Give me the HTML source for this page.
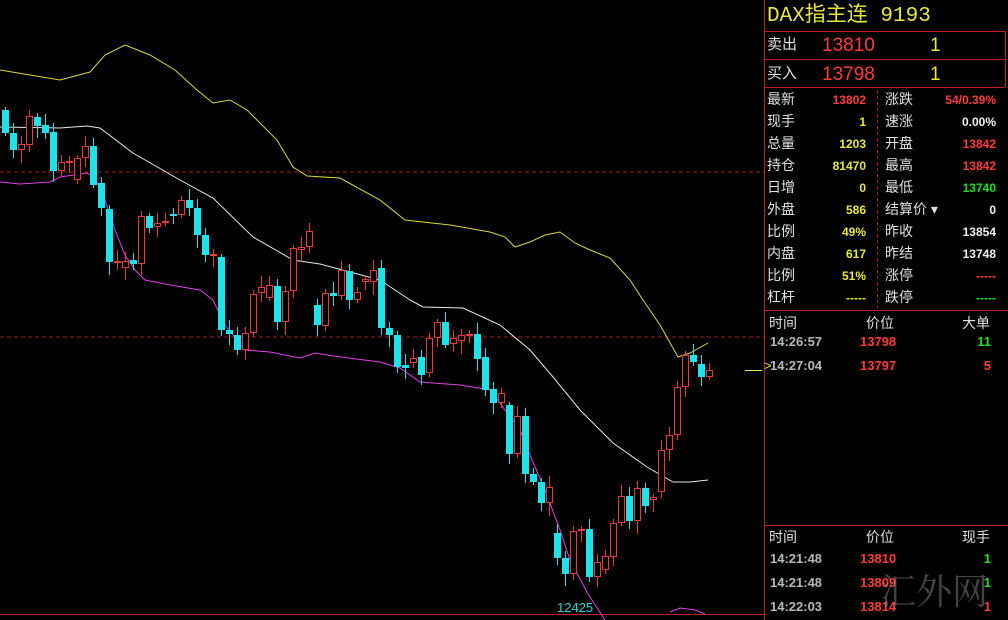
<!DOCTYPE html>
<html><head><meta charset="utf-8"><style>
body{margin:0;background:#000;width:1008px;height:620px;overflow:hidden;position:relative;font-family:"Liberation Sans","Noto Sans CJK SC",sans-serif}
.t{position:absolute;white-space:nowrap;font-size:13px;line-height:16px}
.cn{color:#e0e0e0;font-size:14px}
.r{color:#ff3b3b;font-weight:bold}.y{color:#e8e83a;font-weight:bold}.w{color:#f0f0f0;font-weight:bold}.g{color:#1fe01f;font-weight:bold}.gr{color:#b8b8b8;font-weight:bold}
.ra{text-align:right}
</style></head><body>
<svg id="c" width="1008" height="620" style="position:absolute;left:0;top:0">
<line x1="0" y1="172" x2="764" y2="172" stroke="#a02020" stroke-dasharray="4,3"/>
<line x1="0" y1="337" x2="764" y2="337" stroke="#a02020" stroke-dasharray="4,3"/>
<line x1="0" y1="614.5" x2="764" y2="614.5" stroke="#c02020"/>
<line x1="745" y1="370.5" x2="762" y2="370.5" stroke="#e8e83a"/>
<polyline fill="none" stroke="#d8d83a" stroke-width="1" points="0,70 30,75 60,80 90,72 105,55 125,45 150,55 175,70 197,90 213,103 230,100 247,110 277,140 293,167 307,176 340,178 380,200 405,220 450,225 490,232 505,237 515,247 530,242 545,235 560,232 575,243 590,250 610,258 630,280 643,300 660,325 678,357 690,353 708,343"/>
<polyline fill="none" stroke="#e8e8e8" points="0,127 60,128 87,126 100,128 133,153 180,180 213,198 253,237 293,260 320,264 380,280 410,300 423,307 463,308 500,325 530,350 553,377 580,410 613,443 647,467 673,482 690,482 708,480"/>
<polyline fill="none" stroke="#e040e0" points="0,182 20,184 50,182 60,177 87,173 95,178 105,200 115,230 125,255 135,270 145,280 170,285 200,290 213,300 225,325 245,350 270,352 300,358 315,353 333,356 380,362 400,368 420,382 460,385 490,390 505,410 520,430 530,455 545,490 560,530 570,560 588,594 605,620"/>
<polyline fill="none" stroke="#e040e0" points="670,612 680,608 695,610 705,614"/>
<g id="k"></g>
<text x="557" y="612" fill="#20d8d8" font-family="Liberation Sans" font-size="13">12425</text>
<!-- panel lines -->
<g stroke="#c02020" fill="none">
<line x1="764.5" y1="0" x2="764.5" y2="620"/>
<line x1="764" y1="31.5" x2="1005" y2="31.5"/>
<line x1="764" y1="59.5" x2="1005" y2="59.5"/>
<line x1="764" y1="87.5" x2="1005" y2="87.5"/>
<line x1="1005.5" y1="31" x2="1005.5" y2="87"/>
<line x1="764" y1="310.5" x2="1008" y2="310.5"/>
<line x1="764" y1="525.5" x2="1008" y2="525.5"/>
<line x1="877.5" y1="90" x2="877.5" y2="308" stroke-dasharray="3,3"/>
</g>
</svg>
<div class="t" style="left:767px;top:5px;font-size:21px;line-height:24px;color:#e8e83a;font-family:'Liberation Mono','Noto Sans CJK SC',monospace">DAX指主连 9193</div>
<div class="t cn" style="left:767px;top:37px;font-size:15px">卖出</div><div class="t" style="left:822px;top:35px;font-size:19px;line-height:22px;color:#ff3b3b">13810</div><div class="t" style="left:930px;top:35px;font-size:19px;line-height:22px;color:#e8e83a">1</div>
<div class="t cn" style="left:767px;top:66px;font-size:15px">买入</div><div class="t" style="left:822px;top:64px;font-size:19px;line-height:22px;color:#ff3b3b">13798</div><div class="t" style="left:930px;top:64px;font-size:19px;line-height:22px;color:#e8e83a">1</div>
<div id="rows"></div>
<div class="t cn" style="left:769px;top:315px">时间</div><div class="t cn" style="left:866px;top:315px">价位</div><div class="t cn" style="left:962px;top:315px">大单</div>
<div class="t gr" style="left:770px;top:334px">14:26:57</div><div class="t r" style="left:860px;top:334px">13798</div><div class="t g ra" style="left:950px;width:41px;top:334px">11</div>
<div class="t gr" style="left:770px;top:358px">14:27:04</div><div class="t r" style="left:860px;top:358px">13797</div><div class="t r ra" style="left:950px;width:41px;top:358px">5</div>
<div class="t" style="left:764px;top:358px;color:#e8e83a">&gt;</div>
<div class="t cn" style="left:769px;top:529px">时间</div><div class="t cn" style="left:866px;top:529px">价位</div><div class="t cn" style="left:962px;top:529px">现手</div>
<div class="t gr" style="left:770px;top:551px">14:21:48</div><div class="t r" style="left:860px;top:551px">13810</div><div class="t g ra" style="left:950px;width:41px;top:551px">1</div>
<div class="t gr" style="left:770px;top:575px">14:21:48</div><div class="t r" style="left:860px;top:575px">13809</div><div class="t g ra" style="left:950px;width:41px;top:575px">1</div>
<div class="t gr" style="left:770px;top:599px">14:22:03</div><div class="t r" style="left:860px;top:599px">13814</div><div class="t r ra" style="left:950px;width:41px;top:599px">1</div>
<div class="t" style="left:880px;top:570px;font-size:36px;line-height:40px;color:rgba(150,150,150,0.45);font-family:'Noto Serif CJK SC',serif">汇外网</div>
<script>
var R=[["最新","13802","r","涨跌","54/0.39%","r"],["现手","1","y","速涨","0.00%","w"],["总量","1203","y","开盘","13842","r"],["持仓","81470","y","最高","13842","r"],["日增","0","y","最低","13740","g"],["外盘","586","y","结算价 ▾","0","w"],["比例","49%","y","昨收","13854","w"],["内盘","617","y","昨结","13748","w"],["比例","51%","y","涨停","-----","r"],["杠杆","-----","y","跌停","-----","g"]];
var h="";R.forEach(function(r,i){var y=91+i*22;
h+='<div class="t cn" style="left:767px;top:'+y+'px">'+r[0]+'</div><div class="t '+r[2]+' ra" style="left:800px;width:66px;top:'+(y+1)+'px;font-size:12px">'+r[1]+'</div><div class="t cn" style="left:885px;top:'+y+'px">'+r[3]+'</div><div class="t '+r[5]+' ra" style="left:920px;width:76px;top:'+(y+1)+'px;font-size:12px">'+r[4]+'</div>';});
document.getElementById("rows").innerHTML=h;
var K=[["c",110,133],["c",133,150],["r",144,150],["r",116,145],["c",117,126],["c",125,133],["c",132,171],["r",162,171],["r",161,163],["r",158,180],["r",146,158],["c",146,185],["c",183,208],["c",209,262],["r",261,263],["r",261,268],["c",260,264],["r",216,264],["c",216,228],["r",223,227],["r",221,222],["c",214,215],["r",200,215],["c",200,208],["c",208,235],["c",235,255],["r",254,255],["c",257,330],["c",330,334],["c",335,350],["r",333,350],["r",294,333],["r",287,293],["r",285,298],["c",286,322],["r",291,322],["r",248,291],["r",247,250],["r",231,247],["c",305,325],["r",293,326],["c",293,296],["r",270,296],["c",271,300],["r",292,300],["r",279,282],["r",270,282],["c",268,328],["c",328,335],["c",335,367],["c",365,368],["r",358,363],["c",357,375],["r",338,373],["r",322,338],["c",322,345],["r",338,344],["r",335,341],["r",334,336],["c",334,359],["c",357,390],["c",389,403],["r",393,403],["c",405,454],["r",416,454],["c",416,474],["c",474,482],["c",482,503],["r",487,503],["c",533,558],["c",558,574],["r",531,574],["r",529,531],["c",529,577],["r",562,577],["r",556,570],["r",523,557],["r",496,523],["c",496,521],["r",488,521],["c",488,506],["r",497,500],["r",450,492],["r",435,450],["r",387,435],["r",355,387],["c",355,362],["c",364,377],["r",370,377]];
var s="";K.forEach(function(k,i){var x=5+i*8,col=k[0]=="c"?"#20e0e8":"#e83a3a",t=k[1],b=k[2];var hi=t-3-(i*7%9),lo=b+3+(i*5%11);
s+='<line x1="'+(x+.5)+'" y1="'+hi+'" x2="'+(x+.5)+'" y2="'+lo+'" stroke="'+col+'"/>';
if(k[0]=="c")s+='<rect x="'+(x-3)+'" y="'+t+'" width="7" height="'+Math.max(2,b-t)+'" fill="'+col+'"/>';
else s+='<rect x="'+(x-2.5)+'" y="'+(t+.5)+'" width="6" height="'+Math.max(1,b-t-1)+'" fill="#000" stroke="'+col+'"/>';});
document.getElementById("k").innerHTML=s;
</script>
</body></html>
